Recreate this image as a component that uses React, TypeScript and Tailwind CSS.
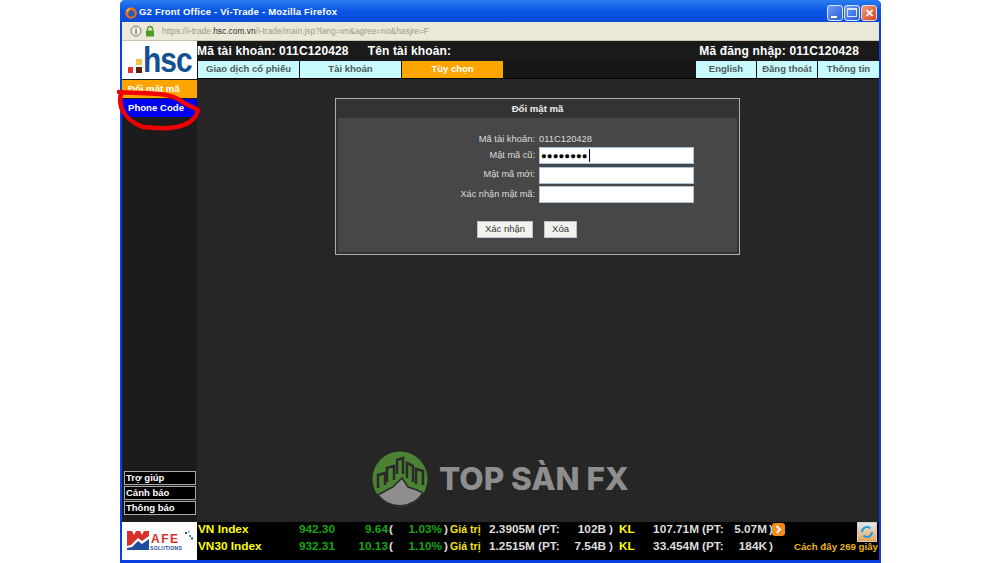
const arial = "font-['Liberation_Sans',Arial,sans-serif]";

function HscLogo() {
  return (
    <div className="w-[75px] h-[38px] shrink-0 bg-white flex items-end pl-[6px] pb-[5px]">
      <svg width="15" height="15" viewBox="0 0 15 15" className="mb-[1px]">
        <rect x="0" y="9" width="5" height="6" fill="#e0332b" />
        <rect x="8" y="9" width="6" height="6" fill="#5b2412" />
        <rect x="8" y="1" width="6" height="6" fill="#f5c445" />
      </svg>
      <span className={`text-[30px] leading-[24px] font-bold text-[#12508f] tracking-[-1px] origin-bottom scale-y-[1.18] ${arial}`}>
        hsc
      </span>
    </div>
  );
}

function AfeLogo() {
  return (
    <div className="w-[75px] h-[38px] shrink-0 bg-white">
      <svg width="75" height="38" viewBox="0 0 75 38">
        <path d="M5 9 L10 9 L12 13 L14 9 L18 9 L20 13 L22 9 L27 9 L27 14 L20 19 L16 16 L9 23 L5 24 Z" fill="#d8312b" />
        <path d="M5 28 L5 26 L10 25 L16 19 L20 22 L27 17 L27 28 Z" fill="#1f4c9c" />
        <text x="29" y="20.5" fontSize="12" fontWeight="700" fill="#d8312b" fontFamily="Liberation Sans" letterSpacing="1.5">AFE</text>
        <text x="28" y="28" fontSize="5.2" fontWeight="700" fill="#1f4c9c" fontFamily="Liberation Sans" letterSpacing="0.2">SOLUTIONS</text>
        <rect x="63" y="10" width="2" height="2" fill="#1f4c9c" />
        <rect x="67" y="13" width="2" height="2" fill="#3f8fd0" />
        <rect x="69" y="15.5" width="2" height="2" fill="#1f4c9c" />
        <rect x="66" y="9" width="1.5" height="1.5" fill="#3f8fd0" />
      </svg>
    </div>
  );
}

function TopNavButton({ label, w, active }: { label: string; w: string; active?: boolean }) {
  return (
    <div
      className={`${w} h-[17px] flex items-center justify-center text-[9.5px] font-bold whitespace-nowrap ${arial} ${
        active ? "bg-[#ffa500] text-white" : "bg-[#c8fbfd] text-[#4d5a5c]"
      }`}
    >
      {label}
    </div>
  );
}

function SideBox({ label }: { label: string }) {
  return (
    <div className={`h-[14px] border border-[#aaaaaa] bg-black text-white text-[9.5px] font-bold leading-[12px] pl-[1px] ${arial}`}>
      {label}
    </div>
  );
}

function Field({ label, value }: { label: string; value?: string }) {
  return (
    <div className="flex items-center h-[19.5px]">
      <div className={`w-[201px] text-right pr-[4px] text-[9.2px] text-[#dddddd] ${arial}`}>{label}</div>
      <div className="w-[155px] h-[17px] bg-white border border-[#a9c0d6] flex items-center pl-[1px]">
        {value && (
          <>
            <span className="text-[9.5px] leading-none text-black tracking-[0.1px]">{value}</span>
            <span className="w-px h-[13px] bg-black ml-[1px]" />
          </>
        )}
      </div>
    </div>
  );
}

function TickerRow({
  name,
  index,
  change,
  pct,
  val,
  valPt,
  vol,
  volPt,
}: {
  name: string;
  index: string;
  change: string;
  pct: string;
  val: string;
  valPt: string;
  vol: string;
  volPt: string;
}) {
  return (
    <div className={`h-[17px] flex items-center text-[11.8px] font-bold whitespace-pre ${arial}`}>
      <div className="w-[84px] text-[#ffff00]">{name}</div>
      <div className="w-[53px] text-right text-[#14a514]">{index}</div>
      <div className="w-[53px] text-right text-[#14a514]">{change}</div>
      <div className="w-[7px] pl-[1px] text-[#dddddd]">(</div>
      <div className="w-[47px] text-right text-[#14a514]">{pct}</div>
      <div className="w-[7px] pl-[2px] text-[#dddddd]">)</div>
      <div className="w-[40px] pl-[1px] text-[10.6px] text-[#f2e21a]">Giá trị</div>
      <div className="w-[49px] text-[#dddddd]">{val}</div>
      <div className="w-[24px] text-[#dddddd]">(PT:</div>
      <div className="w-[44px] text-right text-[#dddddd]">{valPt}</div>
      <div className="w-[7px] pl-[3px] text-[#dddddd]">)</div>
      <div className="w-[20px] pl-[6px] text-[#ffff00]">KL</div>
      <div className="w-[66px] text-right text-[#dddddd]">{vol}</div>
      <div className="w-[25px] pl-[3px] text-[#dddddd]">(PT:</div>
      <div className="w-[43px] text-right text-[#dddddd]">{volPt}</div>
      <div className="w-[6px] pl-[2px] text-[#dddddd]">)</div>
    </div>
  );
}

export default function App() {
  return (
    <div className="relative w-[1000px] h-[563px] bg-white overflow-hidden">
      <div className="ml-[120px] w-[761px] h-[563px] flex flex-col bg-[#0a3fe0] rounded-t-[5px] px-[2px] pb-[3px]">
        {/* title bar */}
        <div className="h-[22px] shrink-0 flex items-center bg-gradient-to-b from-[#2a7cf0] via-[#0a55e4] to-[#0a4bd8] -mx-[2px] rounded-t-[5px] pt-[3px] pl-[5px] pr-[4px]">
          <svg width="12" height="12" viewBox="0 0 14 14">
            <circle cx="7" cy="7" r="6.8" fill="#e8701f" />
            <circle cx="7.5" cy="7.5" r="3.8" fill="#2c5da8" />
            <path d="M1 5C2.5 1.5 6 .5 8 .8 5.5 1.5 4 3 4 5.5 3 5 2 5 1 5z" fill="#f4b63c" />
          </svg>
          <span className={`ml-[2px] text-[9.5px] font-bold text-white tracking-[0.2px] ${arial}`}>
            G2 Front Office - Vi-Trade - Mozilla Firefox
          </span>
          <div className="ml-auto flex gap-[1px]">
            <div className="w-[16px] h-[16px] rounded-[3px] border border-[#dbe6fb] bg-gradient-to-br from-[#6f9df5] to-[#2a5ad8] flex items-end pl-[3px] pb-[2px]">
              <div className="w-[6px] h-[2px] bg-white" />
            </div>
            <div className="w-[16px] h-[16px] rounded-[3px] border border-[#dbe6fb] bg-gradient-to-br from-[#6f9df5] to-[#2a5ad8] flex items-center justify-center">
              <div className="w-[10px] h-[9px] border border-[#dbe6fb] border-t-2" />
            </div>
            <div className="w-[16px] h-[16px] rounded-[3px] border border-[#f3d6c8] bg-gradient-to-br from-[#ee9a78] to-[#d8401c] flex items-center justify-center text-white text-[11px] font-bold leading-none">
              ✕
            </div>
          </div>
        </div>

        {/* address bar */}
        <div className="h-[19px] shrink-0 flex items-center bg-[#ebe8d8] pl-[8px] border-b border-[#c8c4b0]">
          <svg width="12" height="12" viewBox="0 0 12 12">
            <circle cx="6" cy="6" r="5" fill="#f4f2e8" stroke="#777" />
            <rect x="5.4" y="5" width="1.3" height="4" fill="#666" />
            <rect x="5.4" y="3" width="1.3" height="1.3" fill="#666" />
          </svg>
          <svg width="10" height="12" viewBox="0 0 10 12" className="ml-[3px]">
            <rect x="1" y="5.5" width="8" height="6" fill="#4f9a2a" />
            <path d="M2.5 5.5V4a2.5 2.5 0 0 1 5 0v1.5" fill="none" stroke="#4f9a2a" strokeWidth="1.4" />
          </svg>
          <span className={`ml-[7px] text-[8.4px] text-[#9a9a8c] ${arial}`}>
            https://i-trade.<span className="text-[#333333]">hsc.com.vn</span>/i-trade/main.jsp?lang=vn&amp;agree=no&amp;hasjre=F
          </span>
        </div>

        {/* page */}
        <div className="flex-1 flex min-h-0 bg-[#262626]">
          {/* left column */}
          <div className="w-[75px] shrink-0 flex flex-col bg-[#1c1c1c]">
            <HscLogo />
            <div className={`h-[18px] mt-[1px] bg-[#ffa500] text-white text-[9.6px] font-bold pl-[6px] leading-[17px] ${arial}`}>
              Đổi mật mã
            </div>
            <div className={`h-[18px] mt-[1px] bg-[#0000f0] text-white text-[9.6px] font-bold pl-[6px] leading-[18px] ${arial}`}>
              Phone Code
            </div>
            <div className="mt-auto flex flex-col gap-[1px] pl-[2px] pr-[1px] pb-[7px]">
              <SideBox label="Trợ giúp" />
              <SideBox label="Cảnh báo" />
              <SideBox label="Thông báo" />
            </div>
            <AfeLogo />
          </div>

          {/* right column */}
          <div className="flex-1 min-w-0 flex flex-col">
            <div className={`h-[20px] shrink-0 flex items-center bg-[#1a1a1a] text-white text-[12px] font-bold tracking-[0.15px] ${arial}`}>
              <span>Mã tài khoản: 011C120428</span>
              <span className="ml-[19px]">Tên tài khoản:</span>
              <span className="ml-auto mr-[20px]">Mã đăng nhập: 011C120428</span>
            </div>
            <div className="h-[18px] shrink-0 flex gap-[1px] bg-[#161616] pl-[1px] border-b border-black">
              <TopNavButton label="Giao dịch cổ phiếu" w="w-[101px]" />
              <TopNavButton label="Tài khoản" w="w-[101px]" />
              <TopNavButton label="Tùy chọn" w="w-[101px]" active />
              <div className="flex-1" />
              <TopNavButton label="English" w="w-[60px]" />
              <TopNavButton label="Đăng thoát" w="w-[60px]" />
              <TopNavButton label="Thông tin" w="w-[61px]" />
            </div>

            {/* dialog */}
            <div className="flex-1 min-h-0 pt-[19px] pl-[138px]">
              <div className="w-[405px] h-[157px] border border-[#aab0b0] bg-[#333333] p-[2px] flex flex-col">
                <div className={`h-[17px] shrink-0 flex items-center justify-center text-[9.6px] font-bold text-[#eeeeee] ${arial}`}>
                  Đổi mật mã
                </div>
                <div className="flex-1 bg-[#474747] pt-[15px]">
                  <div className={`h-[13px] flex items-center text-[9.4px] text-[#dddddd] ${arial}`}>
                    <div className="w-[201px] text-right pr-[4px]">Mã tài khoản:</div>
                    <div>011C120428</div>
                  </div>
                  <Field label="Mật mã cũ:" value="●●●●●●●●" />
                  <Field label="Mật mã mới:" />
                  <Field label="Xác nhận mật mã:" />
                  <div className="flex mt-[16px] pl-[139px] gap-[11px]">
                    <div className={`w-[56px] h-[17px] bg-[#f2f2ee] border border-[#b8c4d0] text-[9.5px] text-[#333333] flex items-center justify-center ${arial}`}>
                      Xác nhận
                    </div>
                    <div className={`w-[33px] h-[17px] bg-[#f2f2ee] border border-[#b8c4d0] text-[9.5px] text-[#333333] flex items-center justify-center ${arial}`}>
                      Xóa
                    </div>
                  </div>
                </div>
              </div>
            </div>

            {/* ticker */}
            <div className="relative h-[38px] shrink-0 bg-black pl-[1px]">
              <div className="-mt-[1px]">
                <TickerRow name="VN Index" index="942.30" change="9.64" pct="1.03%" val="2.3905M" valPt="102B" vol="107.71M" volPt="5.07M" />
                <TickerRow name="VN30 Index" index="932.31" change="10.13" pct="1.10%" val="1.2515M" valPt="7.54B" vol="33.454M" volPt="184K" />
              </div>
              <div className="absolute left-[575px] top-[1px] w-[13px] h-[13px] rounded-[3px] bg-[#f28c1e] flex items-center justify-center">
                <svg width="7" height="9" viewBox="0 0 7 9" fill="none" stroke="white" strokeWidth="1.8">
                  <path d="M1.5 1 L5 4.5 L1.5 8" />
                </svg>
              </div>
              <div className="absolute right-[2px] top-[0px] w-[20px] h-[20px] bg-gradient-to-b from-[#dfe8ee] to-[#e8a24a] border border-[#cccccc] flex items-center justify-center">
                <svg width="14" height="14" viewBox="0 0 14 14" fill="none" stroke="#1f9ae0" strokeWidth="2">
                  <path d="M2 7a5 5 0 0 1 8.5-3.5" />
                  <path d="M12 7a5 5 0 0 1-8.5 3.5" />
                </svg>
              </div>
              <div className={`absolute right-[1px] bottom-[5px] text-[9.7px] font-bold text-[#e6b422] whitespace-nowrap ${arial}`}>
                Cách đây 269 giây
              </div>
            </div>
          </div>
        </div>
      </div>

      {/* red marker scribble */}
      <svg className="absolute left-[116px] top-[85px]" width="90" height="50" viewBox="0 0 90 50" fill="none">
        <path
          d="M3 7 C15 8 30 8 43 9 C55 10 62 13 68 18 C74 21 79 23 82 25 C81 31 77 35 72 38 C62 44 45 44 27 42 C18 39 9 32 5 22 C4 17 4 12 5 8"
          stroke="#f00000"
          strokeWidth="4.5"
          strokeLinecap="round"
        />
      </svg>

      {/* watermark */}
      <div className="absolute left-[372px] top-[451px] flex items-center">
        <svg width="56" height="56" viewBox="0 0 56 56">
          <circle cx="28" cy="28" r="27.5" fill="#4c8233" />
          <path d="M6 44 L15 39 L21 36 L30 27 L36 36 L45 39 L51 42 A27.5 27.5 0 0 1 6 44Z" fill="#8e8e8e" stroke="#2a2a2a" strokeWidth="1.5" />
          <g fill="none" stroke="#2a2a2a" strokeWidth="2.5">
            <path d="M6 37 L6 24 L13 22 L13 34" />
            <path d="M15 31 L15 17 L22 15 L22 29" />
            <path d="M25 23 L25 9 L31 7 L31 23" />
            <path d="M35 27 L35 12 L41 15 L41 31" />
            <path d="M44 33 L44 18 L51 20 L51 34" />
          </g>
        </svg>
        <span className="ml-[11px] text-[31.5px] leading-none font-extrabold text-[#8e8e8e] font-['Inter',sans-serif]">
          TOP SÀN FX
        </span>
      </div>
    </div>
  );
}
